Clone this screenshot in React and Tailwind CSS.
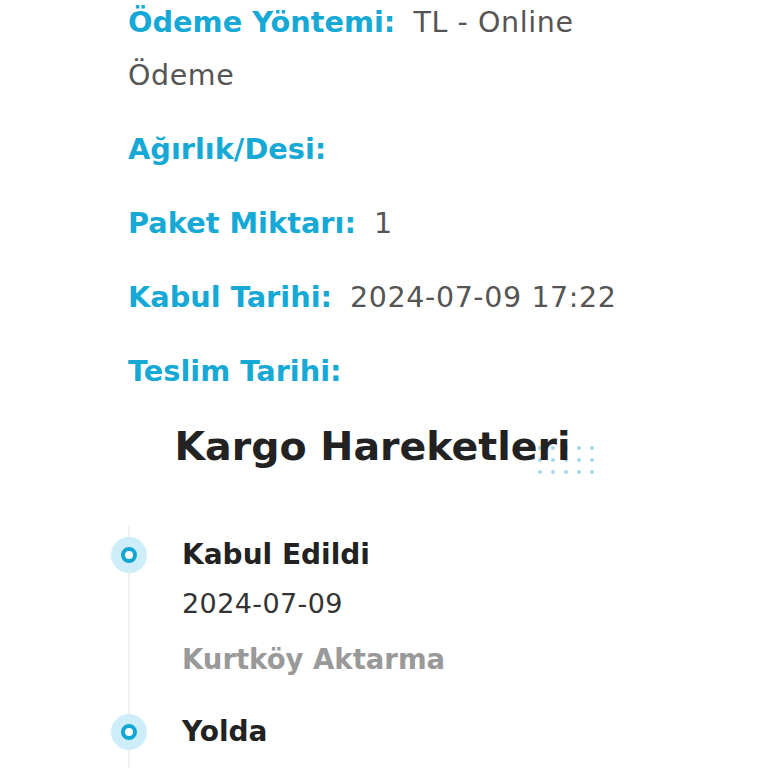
const info = [
  { label: "Ödeme Yöntemi:", value: "TL - Online Ödeme" },
  { label: "Ağırlık/Desi:", value: "" },
  { label: "Paket Miktarı:", value: "1" },
  { label: "Kabul Tarihi:", value: "2024-07-09 17:22" },
  { label: "Teslim Tarihi:", value: "" },
];

const events = [
  { title: "Kabul Edildi", date: "2024-07-09", place: "Kurtköy Aktarma" },
  { title: "Yolda", date: "2024-07-10", place: "İstanbul" },
];

function Dots() {
  const cells = [];
  for (let r = 0; r < 3; r++) {
    for (let c = 0; c < 5; c++) {
      cells.push(<span key={r + "-" + c} className="h-[4px] w-[4px] rounded-full bg-[#a3d8ee]" />);
    }
  }
  return (
    <div className="absolute right-0 top-[28px] grid grid-cols-5 gap-x-[9px] gap-y-[8px]">
      {cells}
    </div>
  );
}

export default function App() {
  return (
    <div className="h-[768px] overflow-hidden bg-white font-['DejaVu_Sans',sans-serif]">
      <div className="-mt-[4px] pl-[128px] pr-[128px]">
        {info.map((row) => (
          <div key={row.label} className="mb-[21px] text-[28.8px] leading-[53px]">
            <span className="font-bold text-[#16a9d6]">{row.label}</span>
            {row.value && (
              <span className="ml-[18px] text-[28.5px] tracking-[0.6px] text-[#555555]">{row.value}</span>
            )}
          </div>
        ))}

        <div className="-mt-[1px] flex justify-center">
          <h2 className="relative pr-[23px] text-[39.5px] font-bold leading-[57px] text-[#222222]">
            <Dots />
            <span className="relative">Kargo Hareketleri</span>
          </h2>
        </div>

        <div className="relative mt-[50px] border-l-[2px] border-[#f0f0f0] pt-[10px]">
          {events.map((e) => (
            <div key={e.title} className="relative mb-[33px] pl-[52px]">
              <span className="absolute -left-[19px] top-[2px] flex h-[36px] w-[36px] items-center justify-center rounded-full bg-[#cdeef9]">
                <span className="h-[16px] w-[16px] rounded-full border-[4px] border-[#12a6d2] bg-white" />
              </span>
              <div className="text-[28px] font-bold leading-[40px] text-[#222222]">{e.title}</div>
              <div className="mt-[9px] text-[27px] tracking-[0.4px] leading-[40px] text-[#333333]">{e.date}</div>
              <div className="mt-[15px] text-[27.5px] font-bold leading-[40px] text-[#999999]">{e.place}</div>
            </div>
          ))}
        </div>
      </div>
    </div>
  );
}
